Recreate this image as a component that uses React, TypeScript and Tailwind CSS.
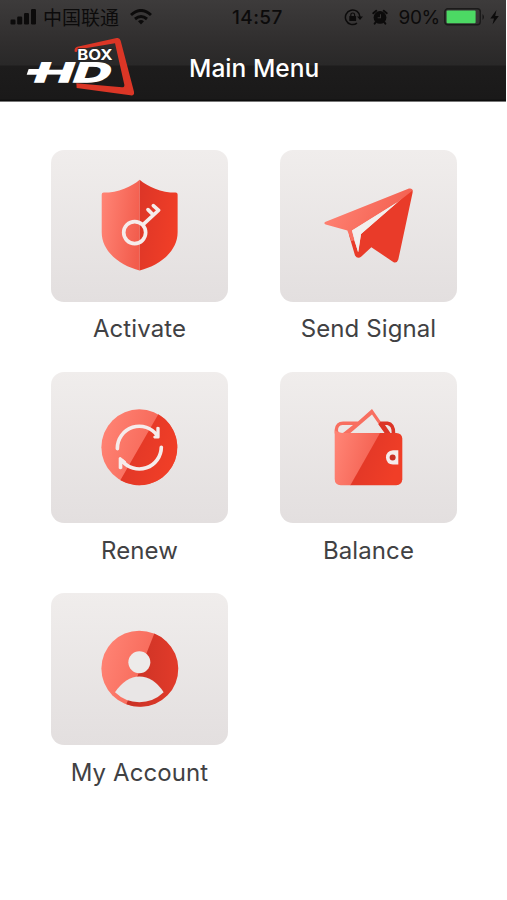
import type { ReactNode } from 'react';

interface MenuTileProps {
  label: string;
  viewBox: string;
  children: ReactNode;
}

function MenuTile({ label, viewBox, children }: MenuTileProps) {
  return (
    <button type="button" className="flex h-[221.7px] w-[177px] flex-col items-center">
      <span className="block h-[151.5px] w-full rounded-[13px] bg-linear-to-b from-[#f0edec] to-[#e3dfdf]">
        <svg viewBox={viewBox} className="h-full w-full">
          {children}
        </svg>
      </span>
      <span className="mt-[11.8px] whitespace-nowrap text-[24px] leading-8 tracking-[0.1px] text-[#414143]">
        {label}
      </span>
    </button>
  );
}

function Gradients() {
  return (
    <svg className="absolute h-0 w-0" aria-hidden="true">
      <defs>
        <linearGradient id="light" x1="0" y1="0.3" x2="1" y2="0.6">
          <stop offset="0" stopColor="#ff8374" />
          <stop offset="1" stopColor="#f25c4c" />
        </linearGradient>
        <linearGradient id="dark" x1="0" y1="0" x2="1" y2="0.4">
          <stop offset="0" stopColor="#dc3527" />
          <stop offset="1" stopColor="#f03e27" />
        </linearGradient>
        <linearGradient id="account" x1="0" y1="0" x2="1" y2="0">
          <stop offset="0" stopColor="#c93125" />
          <stop offset="1" stopColor="#e23b2a" />
        </linearGradient>
      </defs>
    </svg>
  );
}

function Logo() {
  return (
    <svg viewBox="78 110 330 180" className="h-[60px] w-[110px]">
      <path
        d="M224 154 Q222 142 232 139 L350 113 Q359 111 362 121 L402 274 Q404 287 391 285 L230 263 L229 249 L366 261 Q374 261 373 253 L345 129 L238 147 Q232 148 230 155Z"
        fill="#db3626"
      />
      <text
        x="232"
        y="179"
        textLength="106"
        lengthAdjust="spacingAndGlyphs"
        fill="white"
        stroke="#242323"
        strokeWidth="5"
        paintOrder="stroke"
        className="font-['Inter'] text-[45px] font-bold"
      >
        BOX
      </text>
      <text
        transform="translate(96 244) skewX(-20)"
        textLength="228"
        lengthAdjust="spacingAndGlyphs"
        fill="white"
        stroke="white"
        strokeWidth="4"
        className="font-['Inter'] text-[80px] font-bold"
      >
        HD
      </text>
      <path d="M86 206 H130 L126 223 H80Z" fill="white" />
    </svg>
  );
}

function StatusBar() {
  return (
    <div className="flex h-[34px] items-center pl-[10px] text-[#0c0b0b]">
      <svg viewBox="0 0 27 16" className="h-4 w-[27px]" fill="currentColor">
        <rect x="0.5" y="10.5" width="5" height="5" rx="1.2" />
        <rect x="7.2" y="7.5" width="5" height="8" rx="1.2" />
        <rect x="14" y="4" width="5" height="11.5" rx="1.2" />
        <rect x="21" y="0" width="5" height="15.5" rx="1.2" />
      </svg>
      <span className="ml-[6px] -mt-[2px] font-['Noto_Sans_CJK_SC',sans-serif] text-[19px] leading-none">中国联通</span>
      <svg viewBox="0 0 22 16" className="ml-[11px] h-4 w-[22px]" fill="none" stroke="currentColor" strokeWidth="3">
        <path d="M1 6 Q11 -3 21 6" />
        <path d="M5 10 Q11 5 17 10" />
        <path d="M8 12.3 Q11 9.8 14 12.3 L11 15.5Z" fill="currentColor" stroke="none" />
      </svg>
      <span className="ml-[80px] w-[52px] font-['Inter'] text-[19px] font-medium leading-none tracking-[0.4px]">
        14:57
      </span>
      <svg viewBox="0 0 19 18" className="ml-[60px] h-[18px] w-[19px]" fill="none" stroke="currentColor" strokeWidth="1.5">
        <path d="M13 15.2 A7.3 7.3 0 1 1 16 9" />
        <path d="M13 8.5 H19 L16 12Z" fill="currentColor" stroke="none" />
        <rect x="5.3" y="8" width="6.8" height="5" rx="0.6" fill="currentColor" stroke="none" />
        <path d="M6.8 8 V6.8 Q6.8 5 8.7 5 T10.6 6.8 V8" strokeWidth="1.2" />
      </svg>
      <svg viewBox="0 0 17 17" className="ml-[9px] h-4 w-4">
        <circle cx="8.5" cy="9" r="6.8" fill="currentColor" />
        <path
          d="M1.3 4.5 L4.5 1.8 M15.7 4.5 L12.5 1.8 M4 14 L2.8 15.6 M13 14 L14.2 15.6"
          stroke="currentColor"
          strokeWidth="2"
          strokeLinecap="round"
        />
        <path d="M9 5.5 V9.2 H6" fill="none" stroke="#343232" strokeWidth="1.1" />
      </svg>
      <span className="ml-[10.5px] w-[41px] font-['Inter'] text-[19px] leading-none tracking-[-0.4px]">90%</span>
      <svg viewBox="0 0 42 18" className="ml-[4.5px] h-[18px] w-[42px] shrink-0">
        <rect x="0.8" y="0.8" width="35.5" height="16" rx="3" fill="none" stroke="#1b1a1a" strokeWidth="1.4" />
        <rect x="2.6" y="2.6" width="29" height="12.6" rx="1" fill="#4cd964" />
        <path d="M38.5 6 Q41.5 9 38.5 12Z" fill="#171616" />
      </svg>
      <svg viewBox="0 0 9 15" className="ml-[4px] h-[15px] w-[9px] shrink-0" fill="currentColor">
        <path d="M6.5 0 L0.3 8.6 H4 L2.5 14.5 L8.8 6 H5.2Z" />
      </svg>
    </div>
  );
}

export default function App() {
  return (
    <div className="h-[900px] w-[507px] overflow-hidden bg-white font-['Inter',sans-serif]">
      <Gradients />
      <header className="h-[102px] w-[506px] border-b border-[#777] bg-[linear-gradient(#3d3b3b_0px,#302e2e_42px,#292828_65px,#1d1c1c_66px,#1a1919_99px,#080808_101px)]">
        <StatusBar />
        <div className="flex items-center pl-[26px] pt-[3px]">
          <Logo />
          <h1 className="ml-[53px] mt-[2px] whitespace-nowrap text-[24.5px] font-medium leading-8 tracking-[0.05px] text-white">
            Main Menu
          </h1>
        </div>
      </header>

      <main className="grid grid-cols-[177px_177px] gap-x-[52px] pl-[51px] pt-12">
        <MenuTile label="Activate" viewBox="18 15 531 455">
          <path
            d="M284 104 C262 124 218 143 176 143 Q170 143 170 149 V262 C170 320 225 362 284 377Z"
            fill="url(#light)"
          />
          <path
            d="M284 104 C306 124 350 143 392 143 Q398 143 398 149 V262 C398 320 343 362 284 377Z"
            fill="url(#dark)"
          />
          <g fill="none" stroke="#f5eceb" strokeWidth="11" strokeLinecap="round" strokeLinejoin="round">
            <circle cx="269" cy="263" r="33" />
            <path d="M294 239 L341 196 L325 182 M309 194 L322 207" />
          </g>
        </MenuTile>

        <MenuTile label="Send Signal" viewBox="15 15 531 455">
          <path
            d="M410 132 Q414 134 413 143 L370 344 Q367 355 356 352 L289 307 L260 334 Q248 344 240 332 L222 270 L232 270 L250 322 L258 267 L368 172Z"
            fill="#e93b29"
          />
          <path
            d="M150 231 L402 131 Q412 129 413 137 L368 172 L231 257 L238 285 L229 289 L217 257 L152 239 Q145 235 150 231Z"
            fill="url(#light)"
          />
          <path d="M368 171 L231 257 L249 322 L258 267Z" fill="#f2efed" />
        </MenuTile>

        <MenuTile label="Renew" viewBox="18 20 531 455">
          <circle cx="283" cy="246" r="114" fill="url(#light)" />
          <path d="M340 147 A114 114 0 0 1 226 345Z" fill="url(#dark)" />
          <g fill="none" stroke="#f5eceb" strokeWidth="11" strokeLinecap="round" strokeLinejoin="round">
            <path d="M217 250 A66 66 0 0 1 337 211" />
            <path d="M349 246 A66 66 0 0 1 231 286" />
          </g>
          <path d="M334 187 Q338 182 344 187 V216 Q344 220 340 220 H328 Q322 216 326 212 L334 209Z" fill="#f5eceb" />
          <path d="M221 278 Q225 273 230 278 L243 289 Q245 296 239 297 L232 296 V309 Q226 315 221 309Z" fill="#f5eceb" />
        </MenuTile>

        <MenuTile label="Balance" viewBox="15 20 531 455">
          <path
            d="M179 205 V192 Q182 170 204 169 H249 L291 131 L341 203 H330 L291 148 L226 203 L219 208Z M189 197 Q188 180 202 179 H234 L206 202 Q193 207 189 197Z"
            fill="#f86f60"
            fillRule="evenodd"
          />
          <path
            d="M317 169 H338 Q361 172 361 205 H330 L310 177Z M330 179 H337 Q351 182 350 204 H347Z"
            fill="#dc3527"
            fillRule="evenodd"
          />
          <path d="M179 195 Q190 204 205 203 H319 L228 360 H197 Q179 358 179 341Z" fill="url(#light)" />
          <path d="M315 203 H364 Q381 204 382 220 V342 Q381 359 364 360 H226Z" fill="url(#dark)" />
          <path d="M370 255 H354 Q333 257 333 277 Q334 297 354 298 H370Z" fill="#f5eceb" />
          <circle cx="353" cy="277" r="9" fill="#c93125" />
        </MenuTile>

        <MenuTile label="My Account" viewBox="18 15 531 455">
          <circle cx="283" cy="242" r="114" fill="url(#light)" />
          <path d="M328 137 A114 114 0 0 1 244 349Z" fill="url(#account)" />
          <circle cx="283" cy="223" r="33" fill="#edebea" />
          <path d="M210 313 Q242 267 283 266 Q326 267 356 313 Q325 343 283 343 Q241 343 210 313Z" fill="#e9e6e6" />
        </MenuTile>
      </main>
    </div>
  );
}
